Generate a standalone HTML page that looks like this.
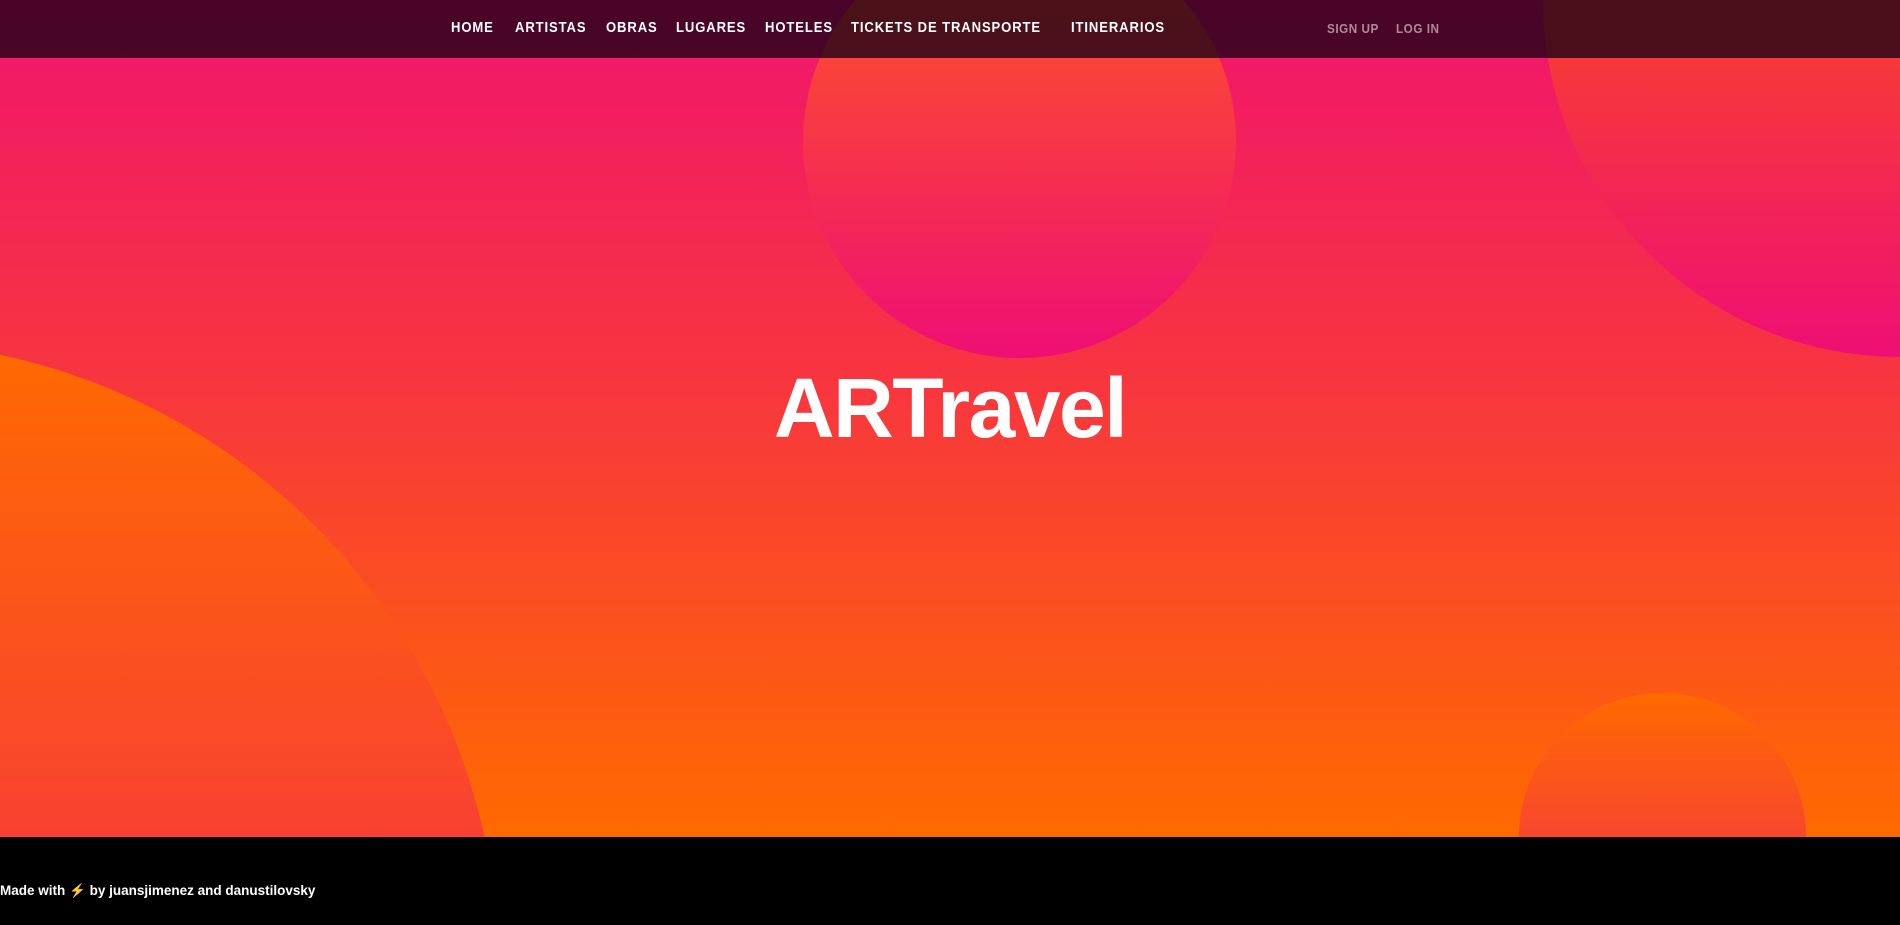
<!DOCTYPE html>
<html><head><meta charset="utf-8"><style>
*{margin:0;padding:0;box-sizing:border-box}
html,body{width:1900px;height:925px;overflow:hidden}
body{position:relative;background:#000;font-family:"Liberation Sans",sans-serif}
.hero{position:absolute;left:0;top:0;width:1900px;height:837px;overflow:hidden;background:linear-gradient(#f0146e 0%,#f7353f 45%,#ff6a00 100%)}
.c{position:absolute;border-radius:50%}
nav{position:absolute;left:0;top:0;width:1900px;height:58px;background:rgba(20,0,18,0.76)}
nav a{position:absolute;top:20px;color:#fff;font-weight:bold;font-size:14.5px;letter-spacing:1px;text-decoration:none;white-space:nowrap;transform:scaleX(0.9);transform-origin:left top}
h1{position:absolute;left:0;width:1900px;top:358px;text-align:center;color:#fff;font-size:84px;font-weight:bold;letter-spacing:-1.5px;line-height:100px}
.foot{position:absolute;left:0;top:883px;color:#fff;font-weight:bold;font-size:13.5px}
</style></head><body>
<div class="hero">
<div class="c" style="left:803px;top:-75px;width:433px;height:433px;background:linear-gradient(#ff5a1e,#ee0f74)"></div>
<div class="c" style="left:1543px;top:-357px;width:714px;height:714px;background:linear-gradient(#f8402f 50%,#ee0f74)"></div>
<div class="c" style="left:-761px;top:341px;width:1260px;height:1260px;background:linear-gradient(#ff6a00 0%,#f73c38 45%,#f0146e 100%)"></div>
<div class="c" style="left:1519px;top:693px;width:287px;height:287px;background:linear-gradient(#ff6a00,#f0245a)"></div>
<h1>ARTravel</h1>
</div>
<nav>
<a style="left:451px">HOME</a>
<a style="left:515px">ARTISTAS</a>
<a style="left:606px">OBRAS</a>
<a style="left:676px">LUGARES</a>
<a style="left:765px">HOTELES</a>
<a style="left:851px">TICKETS DE TRANSPORTE</a>
<a style="left:1071px">ITINERARIOS</a>
<a style="left:1327px;color:#b08a9a;font-size:13px;top:21px;letter-spacing:0.6px">SIGN UP</a>
<a style="left:1396px;color:#b08a9a;font-size:13px;top:21px;letter-spacing:0.6px">LOG IN</a>
</nav>
<div class="foot">Made with <span style="color:#f5b820">⚡</span> by juansjimenez and danustilovsky</div>
</body></html>
